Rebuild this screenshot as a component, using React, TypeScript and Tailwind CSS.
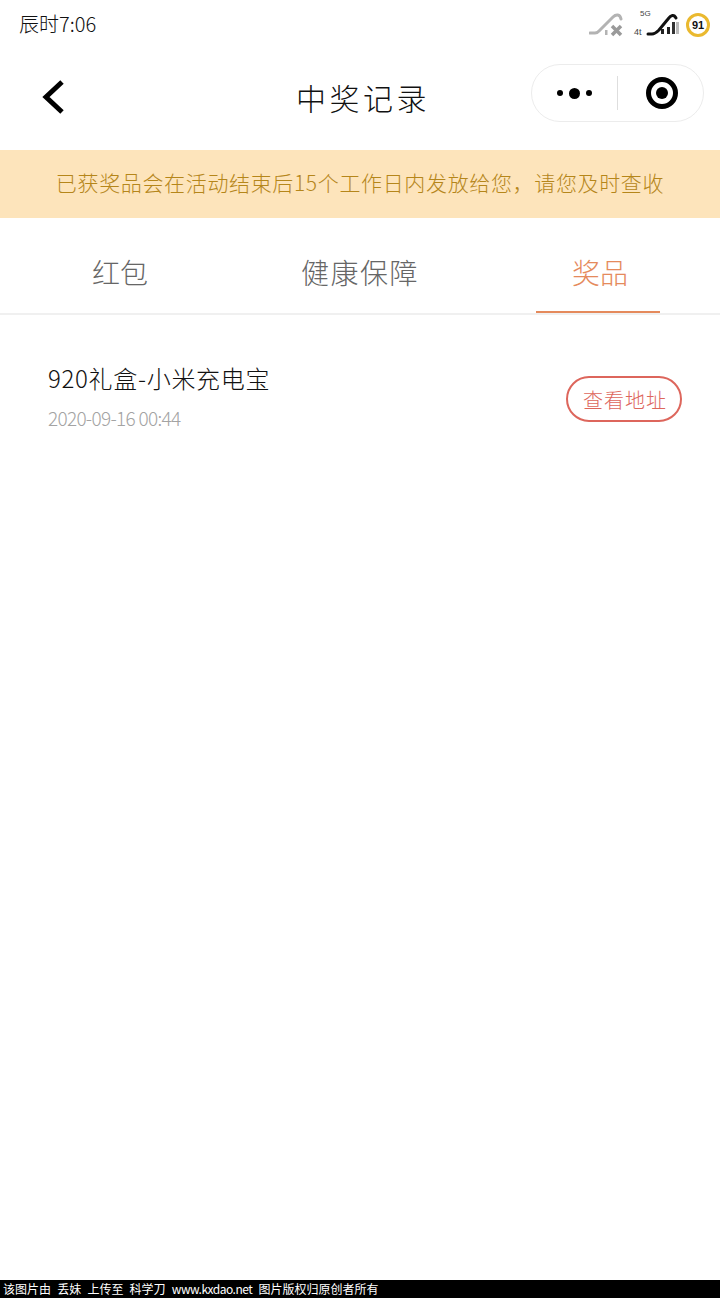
const cjk = "font-['Noto_Sans_CJK_SC','Noto_Sans',sans-serif]";

function StatusIcons() {
    return (
        <div className="flex items-start gap-[8px]">
            <svg width="36" height="26" viewBox="0 0 36 26" fill="none">
                <path d="M1 21H6C9 21 10 19 12 17L24 5C27 2 31 2 32 7" stroke="#b3b3b3" strokeWidth="3" strokeLinecap="round" />
                <rect x="16" y="18" width="2.5" height="5" fill="#b3b3b3" />
                <path d="M23 14L32 23M32 14L23 23" stroke="#9a9a9a" strokeWidth="3.5" />
            </svg>
            <svg width="46" height="30" viewBox="0 0 46 30" fill="none" className="mt-[-4px]">
                <text x="7" y="8" fontSize="8" fill="#444" fontFamily="Liberation Sans, sans-serif">5G</text>
                <text x="1" y="27" fontSize="9" fill="#444" fontFamily="Liberation Sans, sans-serif">4t</text>
                <path d="M15 26H19C22 26 24 24 26 22L35 11C38 7 41 6 43 10" stroke="#111" strokeWidth="3" strokeLinecap="round" />
                <rect x="28" y="21" width="3" height="5" fill="#222" />
                <rect x="34" y="19" width="3" height="7" fill="#222" />
                <rect x="39" y="14" width="3" height="12" fill="#333" />
                <rect x="43" y="14" width="3" height="12" fill="#bbb" />
            </svg>
            <div className="w-[24px] h-[24px] rounded-full border-[3px] border-[#eab92f] flex items-center justify-center ml-[-1px] mt-[1px]">
                <span className="font-['Liberation_Sans',sans-serif] text-[11px] font-bold text-[#111] leading-none">91</span>
            </div>
        </div>
    );
}

export default function App() {
    return (
        <div className={`${cjk} w-[720px] h-[1298px] flex flex-col bg-white overflow-hidden`}>
            <div className="h-[48px] pl-[19px] pr-[10px] flex items-start justify-between pt-[12px] shrink-0">
                <span className="text-[20px] leading-[24px] text-[#111] font-light">辰时7:06</span>
                <StatusIcons />
            </div>

            <div className="h-[102px] grid grid-cols-[1fr_auto_1fr] items-center shrink-0 pb-[4px]">
                <div className="pl-[42px]">
                    <svg width="24" height="36" viewBox="0 0 24 36" fill="none">
                        <path d="M20 3L4 18L20 33" stroke="#000" strokeWidth="5" />
                    </svg>
                </div>
                <h1 className="text-[30px] leading-[40px] tracking-[3.5px] pl-[6px] font-light text-[#111]">中奖记录</h1>
                <div className="flex justify-end pr-[16px]">
                    <div className="w-[173px] h-[58px] rounded-full border border-[#ececec] flex items-center mt-[-8px]">
                        <div className="w-[85px] flex items-center justify-center gap-[6px]">
                            <span className="w-[6px] h-[6px] rounded-full bg-black" />
                            <span className="w-[11px] h-[11px] rounded-full bg-black" />
                            <span className="w-[6px] h-[6px] rounded-full bg-black" />
                        </div>
                        <div className="w-px h-[34px] bg-[#dedede]" />
                        <div className="flex-1 flex items-center justify-center pl-[2px]">
                            <div className="w-[32px] h-[32px] rounded-full border-[5px] border-black flex items-center justify-center">
                                <span className="w-[12px] h-[12px] rounded-full bg-black" />
                            </div>
                        </div>
                    </div>
                </div>
            </div>

            <div className="h-[68px] bg-[#fde4bb] flex items-center justify-center shrink-0">
                <p className="text-[21px] tracking-[0.65px] font-light text-[#b5861a] pb-[2px]">已获奖品会在活动结束后15个工作日内发放给您，请您及时查收</p>
            </div>

            <div className="h-[97px] grid grid-cols-3 border-b-[2px] border-[#f0f0f0] shrink-0">
                <div className="flex items-center justify-center pt-[12px] text-[28px] font-light text-[#666]">红包</div>
                <div className="flex items-center justify-center pt-[12px] text-[28px] tracking-[1.5px] font-light text-[#666]">健康保障</div>
                <div className="relative flex items-center justify-center pt-[12px] text-[28px] font-light text-[#e58a5c]">
                    奖品
                    <span className="absolute bottom-[0px] left-[56px] w-[124px] h-[2px] bg-[#e58a5c]" />
                </div>
            </div>

            <div className="flex items-start justify-between pl-[48px] pr-[38px] pt-[43px]">
                <div>
                    <div className="text-[24px] leading-[40px] tracking-[0.7px] font-light text-[#111]">920礼盒-小米充电宝</div>
                    <div className="text-[19px] leading-[28px] tracking-[-0.7px] mt-[6px] font-light text-[#a3a3a3]">2020-09-16 00:44</div>
                </div>
                <button className="mt-[18px] w-[116px] h-[46px] rounded-full border-[2px] border-[#dd665c] text-[20px] font-light text-[#dd665c] tracking-[1px] flex items-center justify-center pt-[1px] pl-[2px]">
                    查看地址
                </button>
            </div>

            <div className="mt-auto h-[18px] bg-black text-white text-[12px] leading-[18px] pl-[3px] [word-spacing:3.5px] whitespace-pre shrink-0">
                该图片由 丢妹 上传至 科学刀 <span className="tracking-[-0.5px]">www.kxdao.net</span> 图片版权归原创者所有
            </div>
        </div>
    );
}
